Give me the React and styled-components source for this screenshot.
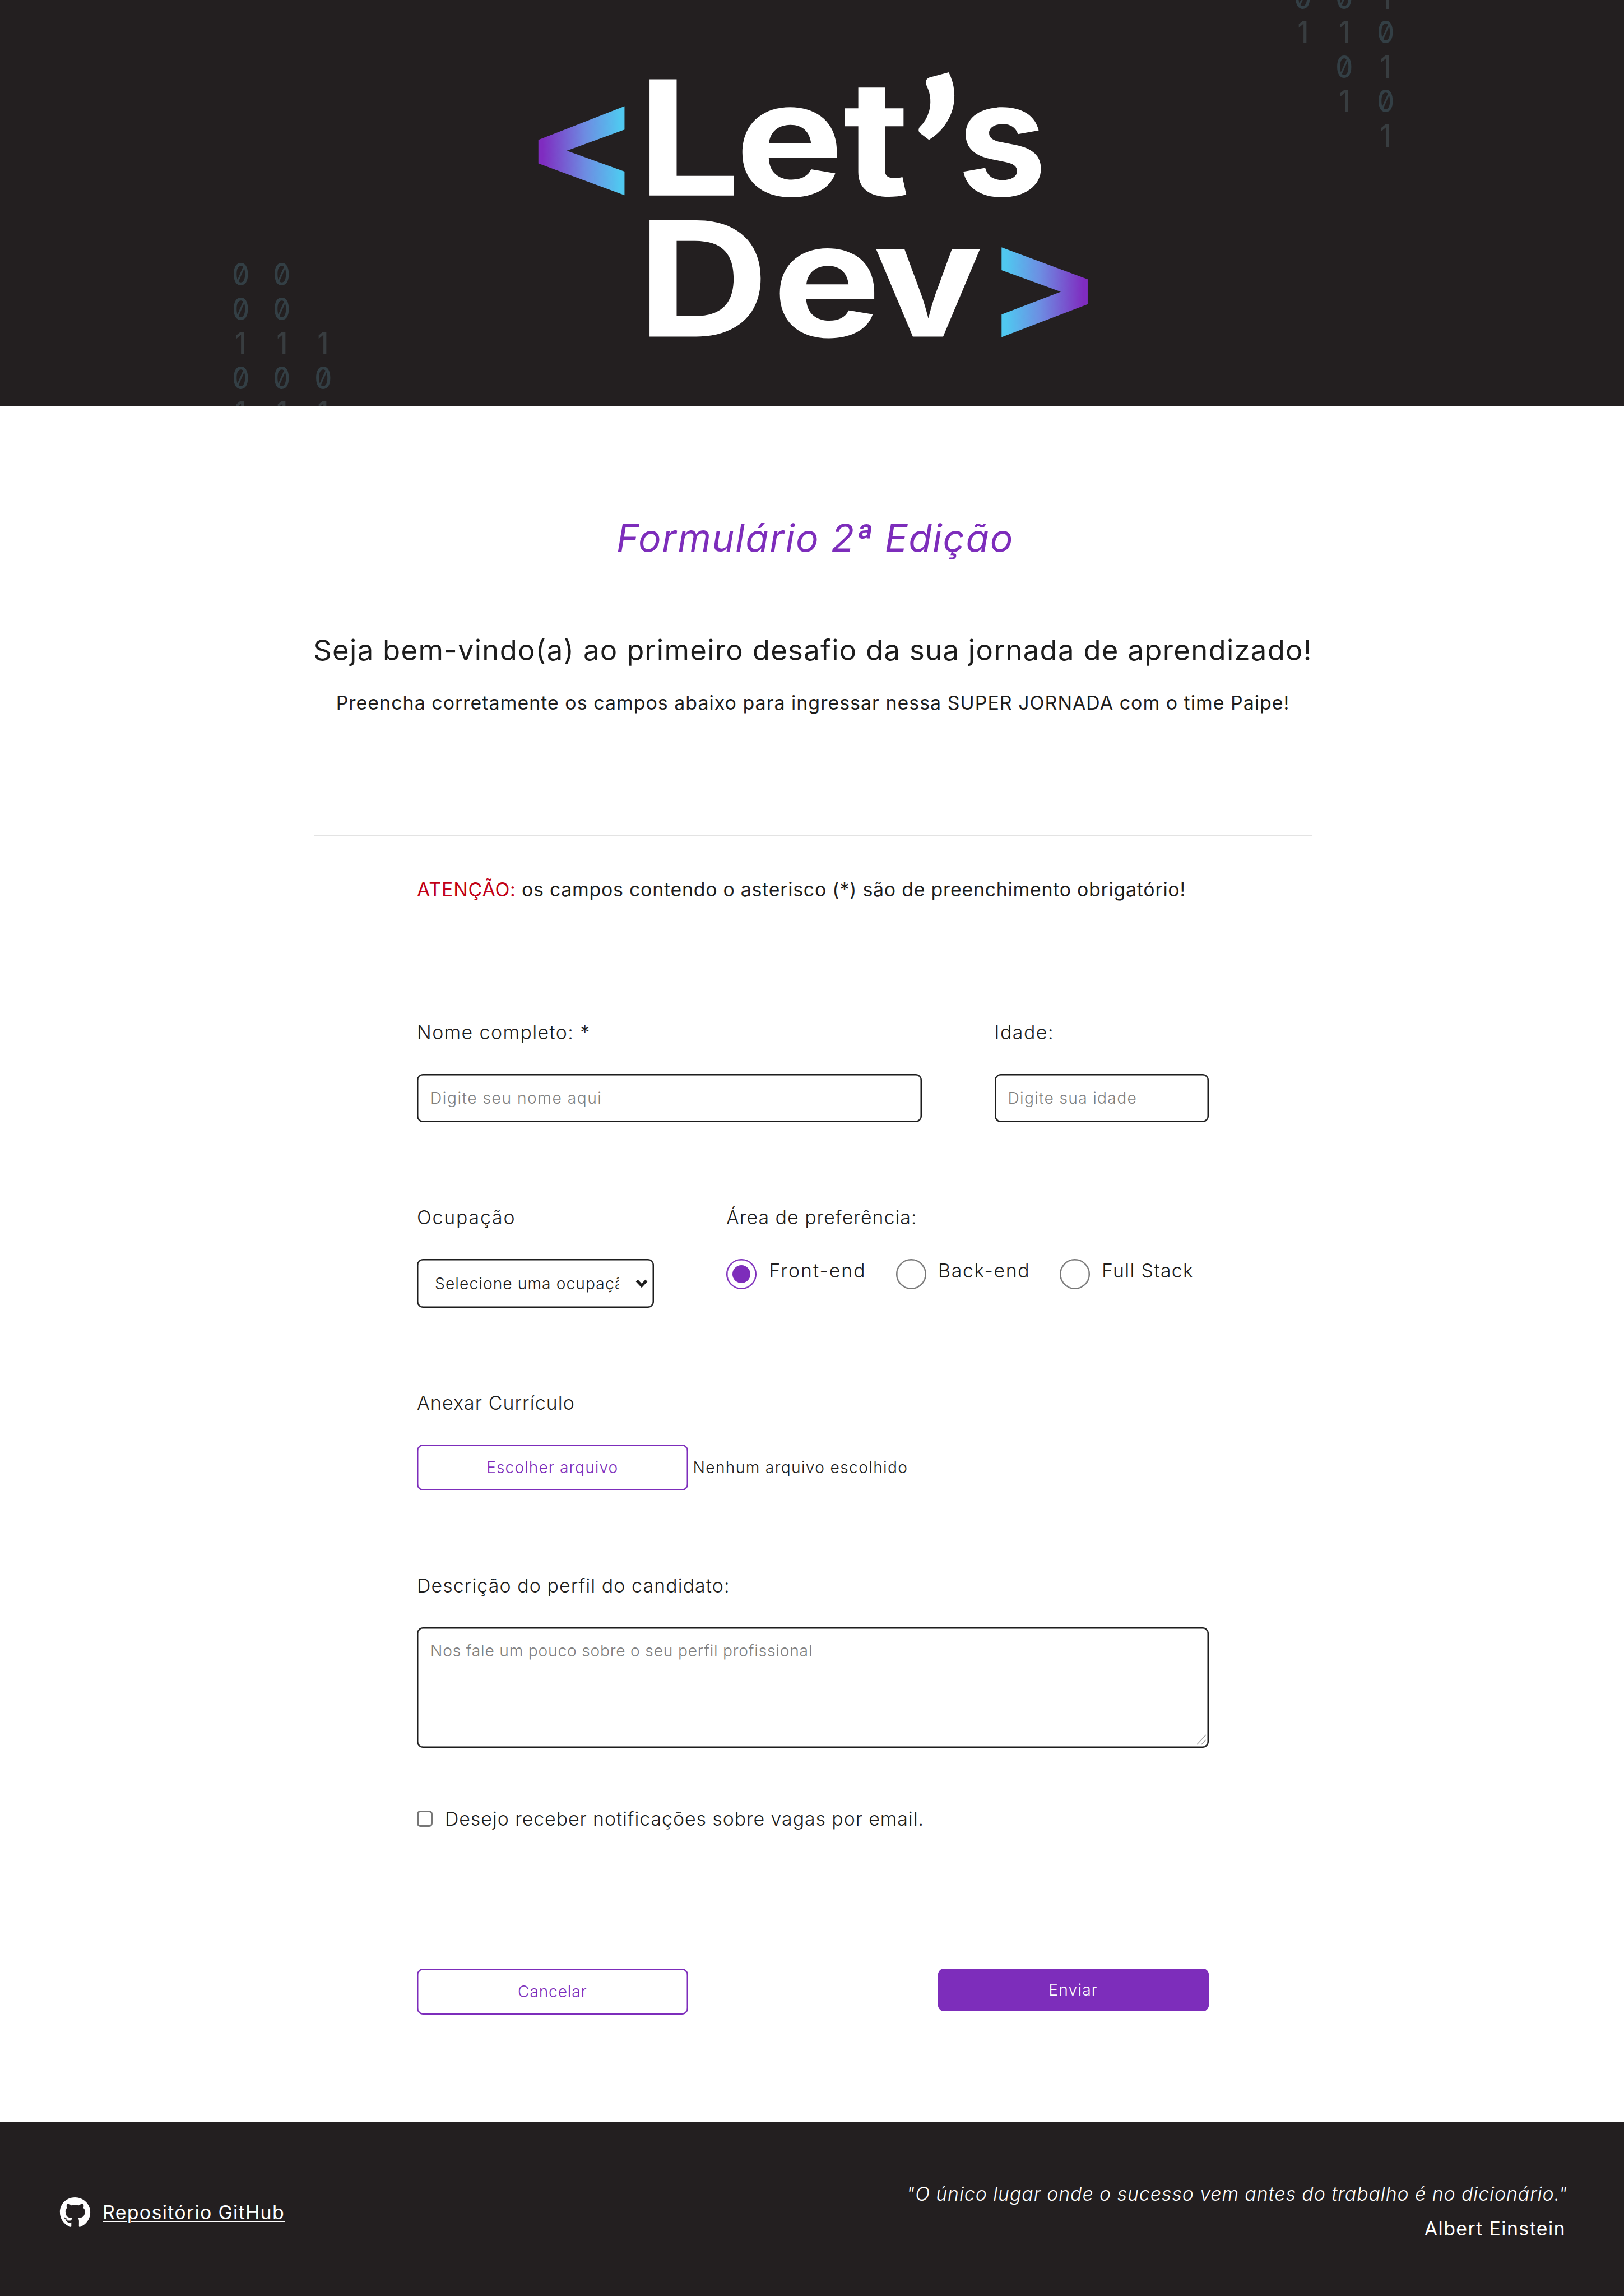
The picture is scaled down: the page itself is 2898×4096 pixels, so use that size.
import React, { useState } from "react";
import styled, { createGlobalStyle, css } from "styled-components";
import { FaGithub } from "react-icons/fa";

const ink = "#1d1d1d";
const dark = "#231f20";
const purple = "#7d2dbb";

const GlobalStyle = createGlobalStyle`
  *, *::before, *::after { box-sizing: border-box; }
  body { margin: 0; background: #fff; }
  body, input, select, textarea, button {
    font-family: Inter, "Liberation Sans", sans-serif;
    color: ${ink};
  }
`;

const Page = styled.div`
  width: 2898px;
  height: 4096px;
  display: flex;
  flex-direction: column;
  overflow: hidden;
`;

/* ---------- header ---------- */

const Header = styled.header`
  position: relative;
  flex: none;
  height: 725px;
  background: ${dark};
  overflow: hidden;
`;

const Logo = styled.svg`
  display: block;
  width: 2898px;
  height: 725px;
`;

const Letters = styled.text`
  font-family: Inter, "Liberation Sans", sans-serif;
  font-weight: 700;
  font-size: 345px;
  fill: #fff;
`;

const Apostrophe = styled.text`
  font-family: Lato, "Liberation Sans", sans-serif;
  font-weight: 900;
  font-size: 460px;
  fill: #fff;
`;

const BinaryRain = styled.div`
  position: absolute;
  top: ${(p) => p.$top}px;
  left: ${(p) => p.$left}px;
  display: flex;
`;

const BitColumn = styled.div`
  width: 73.7px;
  display: flex;
  flex-direction: column;
  align-items: center;
`;

const Bit = styled.span`
  height: 61.5px;
  line-height: 61.5px;
  font-size: 55px;
  font-weight: 500;
  font-feature-settings: "zero" 1;
  color: ${(p) => p.$color};
  transform: scaleX(0.86);
`;

/* ---------- intro ---------- */

const Main = styled.main`
  flex: 1;
  padding-left: 3px;
  display: flex;
  flex-direction: column;
  align-items: center;
`;

const Title = styled.h1`
  margin: 190px 0 124px;
  padding-left: 8px;
  font-size: 67.8px;
  font-weight: 400;
  font-style: italic;
  line-height: 88px;
  letter-spacing: 1.63px;
  color: ${purple};
`;

const Welcome = styled.h2`
  margin: 0 0 39px;
  font-size: 50.8px;
  font-weight: 400;
  line-height: 66px;
  letter-spacing: 1.31px;
  white-space: nowrap;
`;

const Lead = styled.p`
  margin: 0;
  font-size: 33.9px;
  line-height: 44px;
  letter-spacing: 1.03px;
  white-space: nowrap;
`;

const Divider = styled.hr`
  width: 1780px;
  height: 2px;
  margin: 214px 0 73px;
  border: 0;
  background: #e3e3e3;
`;

/* ---------- form ---------- */

const Form = styled.form`
  width: 1413px;
  display: flex;
  flex-direction: column;
`;

const Notice = styled.p`
  margin: 0 0 211px;
  font-size: 33.9px;
  line-height: 44px;
  letter-spacing: 0.74px;
  white-space: nowrap;
`;

const Alert = styled.span`
  color: #c20016;
  letter-spacing: 0.8px;
`;

const Row = styled.div`
  display: flex;
  margin-bottom: ${(p) => p.$after}px;
`;

const Field = styled.div`
  width: ${(p) => p.$width}px;
  margin-left: ${(p) => p.$offset || 0}px;
  display: flex;
  flex-direction: column;
  gap: 52px;
`;

const Label = styled.label`
  font-size: 33.9px;
  font-weight: 300;
  line-height: 44px;
  letter-spacing: ${(p) => p.$track}px;
  white-space: nowrap;
`;

const control = css`
  display: block;
  width: 100%;
  margin: 0;
  border: 2px solid ${ink};
  border-radius: 11px;
  background: #fff;
  box-shadow: inset 0 0 0 0.5px ${ink};
  outline: none;
  font-size: 28.2px;
  font-weight: 300;
  letter-spacing: ${(p) => p.$track}px;
  &::placeholder { color: #808080; opacity: 1; }
`;

const Input = styled.input`
  ${control}
  height: 86px;
  padding: 0 22px;
`;

const SelectBox = styled.div`
  position: relative;
`;

const Select = styled.select`
  ${control}
  height: 87px;
  padding: 0 60px 0 30px;
  appearance: none;
`;

const Chevron = styled.svg`
  position: absolute;
  right: 11px;
  top: 36px;
  width: 22px;
  height: 16px;
`;

const Radios = styled.div`
  display: flex;
`;

const RadioLabel = styled.label`
  flex: none;
  width: ${(p) => p.$width}px;
  display: flex;
  gap: ${(p) => p.$gap}px;
  font-size: 33.9px;
  font-weight: 300;
  line-height: 41px;
  letter-spacing: ${(p) => p.$track}px;
  white-space: nowrap;
`;

const Radio = styled.input`
  appearance: none;
  flex: none;
  width: 54px;
  height: 54px;
  margin: 0;
  border: 2px solid #767676;
  border-radius: 50%;
  box-shadow: inset 0 0 0 0.5px #767676;
  display: grid;
  place-items: center;
  &:checked {
    border-color: ${purple};
    box-shadow: inset 0 0 0 0.5px ${purple};
  }
  &:checked::before {
    content: "";
    width: 32px;
    height: 32px;
    border-radius: 50%;
    background: ${purple};
  }
`;

const FileLine = styled.div`
  display: flex;
  align-items: center;
  gap: 9px;
`;

const FileStatus = styled.span`
  font-size: 28.2px;
  font-weight: 300;
  letter-spacing: 1.33px;
`;

const Button = styled.button`
  width: 483.5px;
  height: ${(p) => (p.$solid ? 76 : 82)}px;
  padding: 0;
  border: ${(p) => (p.$solid ? "0" : `2px solid ${purple}`)};
  border-radius: 11px;
  box-shadow: inset 0 0 0 0.5px ${purple};
  background: ${(p) => (p.$solid ? purple : "#fff")};
  color: ${(p) => (p.$solid ? "#fff" : purple)};
  font-size: 28.2px;
  font-weight: 300;
  letter-spacing: ${(p) => p.$track}px;
`;

const AreaBox = styled.div`
  position: relative;
`;

const TextArea = styled.textarea`
  ${control}
  height: 215px;
  padding: 19px 22px;
  line-height: 42px;
  resize: none;
`;

const Grip = styled.svg`
  position: absolute;
  right: 3px;
  bottom: 4px;
  width: 20px;
  height: 22px;
`;

const CheckLine = styled.label`
  display: flex;
  align-items: center;
  gap: 22px;
  margin-bottom: 245px;
  font-size: 33.9px;
  font-weight: 300;
  line-height: 44px;
  letter-spacing: 0.92px;
`;

const Checkbox = styled.input`
  appearance: none;
  width: 28px;
  height: 29px;
  margin: 0;
  border: 3px solid #767676;
  border-radius: 6px;
`;

const Actions = styled.div`
  display: flex;
  justify-content: space-between;
  align-items: flex-start;
`;

/* ---------- footer ---------- */

const Footer = styled.footer`
  flex: none;
  height: 310px;
  padding: 106px 101px 0 106px;
  display: flex;
  justify-content: space-between;
  align-items: flex-start;
  background: ${dark};
  color: #fff;
  font-size: 33.9px;
  line-height: 44px;
`;

const Repo = styled.a`
  display: flex;
  align-items: center;
  gap: 21px;
  margin-top: 27px;
  color: #fff;
  letter-spacing: 1.32px;
  text-decoration: none;
`;

const RepoName = styled.span`
  text-decoration: underline;
  text-decoration-thickness: 2.4px;
  text-underline-offset: 3px;
`;

const Quote = styled.blockquote`
  margin: 0;
  display: flex;
  flex-direction: column;
  align-items: flex-end;
  gap: 18px;
`;

const Saying = styled.q`
  quotes: none;
  font-style: italic;
  font-weight: 300;
  letter-spacing: 0.92px;
  white-space: nowrap;
`;

const Author = styled.cite`
  padding-right: 3px;
  font-style: normal;
  letter-spacing: 1.4px;
`;

const Binary = ({ top, left, columns }) => (
  <BinaryRain $top={top} $left={left} aria-hidden="true">
    {columns.map((bits, c) => (
      <BitColumn key={c}>
        {bits.split("").map((b, i) => (
          <Bit key={i} $color={b === "0" ? "#333f45" : "#383d40"}>
            {b === "-" ? "" : b}
          </Bit>
        ))}
      </BitColumn>
    ))}
  </BinaryRain>
);

const areas = [
  { name: "Front-end", width: 302.5, gap: 22.5, track: 2.0 },
  { name: "Back-end", width: 292, gap: 21.5, track: 1.64 },
  { name: "Full Stack", width: 260, gap: 21.5, track: 1.3 },
];

export default function App() {
  const [area, setArea] = useState("Front-end");

  return (
    <Page>
      <GlobalStyle />

      <Header>
        <Logo viewBox="0 0 3508 877.6" role="img" aria-label="Let’s Dev">
          <defs>
            <linearGradient id="open" x1="0" x2="1" y1="0" y2="0">
              <stop offset="0.05" stopColor="#7f2cc0" />
              <stop offset="0.55" stopColor="#6d8de2" />
              <stop offset="0.95" stopColor="#50c8f0" />
            </linearGradient>
            <linearGradient id="close" x1="1" x2="0" y1="0" y2="0">
              <stop offset="0.05" stopColor="#7f2cc0" />
              <stop offset="0.55" stopColor="#6d8de2" />
              <stop offset="0.95" stopColor="#50c8f0" />
            </linearGradient>
          </defs>
          <polygon
            fill="url(#open)"
            points="1163,302 1349,229.5 1349,280 1224.5,325.4 1349,370.5 1349,421.5 1163,353"
          />
          <polygon
            fill="url(#close)"
            points="2349.5,603 2163.5,534 2163.5,583.5 2291.5,630 2163.5,679 2163.5,728 2349.5,657"
          />
          <Letters transform="scale(1.14 1)" x="1208 1393 1597" y="422.3">Let</Letters>
          <Apostrophe transform="rotate(6 2027 215)" x="1974" y="510">’</Apostrophe>
          <Letters x="2068" y="422.3">s</Letters>
          <Letters transform="scale(1.14 1)" x="1208 1464 1655" y="726.8">Dev</Letters>
        </Logo>
        <Binary top={459} left={392.6} columns={["00101", "00101", "--101"]} />
        <Binary top={-34.5} left={2288.4} columns={["01", "0101", "10101"]} />
      </Header>

      <Main>
        <Title>Formulário 2ª Edição</Title>
        <Welcome>Seja bem-vindo(a) ao primeiro desafio da sua jornada de aprendizado!</Welcome>
        <Lead>
          Preencha corretamente os campos abaixo para ingressar nessa SUPER JORNADA com o time Paipe!
        </Lead>
        <Divider />

        <Form onSubmit={(e) => e.preventDefault()}>
          <Notice>
            <Alert>ATENÇÃO:</Alert> os campos contendo o asterisco (*) são de preenchimento obrigatório!
          </Notice>

          <Row $after={148}>
            <Field $width={901}>
              <Label htmlFor="name" $track={1.4}>Nome completo: *</Label>
              <Input id="name" placeholder="Digite seu nome aqui" $track={1.52} />
            </Field>
            <Field $width={382.5} $offset={129.5}>
              <Label htmlFor="age" $track={1.5}>Idade:</Label>
              <Input id="age" placeholder="Digite sua idade" $track={1.3} />
            </Field>
          </Row>

          <Row $after={148}>
            <Field $width={423}>
              <Label htmlFor="job" $track={1.8}>Ocupação</Label>
              <SelectBox>
                <Select id="job" $track={1.08}>
                  <option>Selecione uma ocupação</option>
                </Select>
                <Chevron viewBox="0 0 22 16" fill="none" stroke={ink} strokeWidth="5">
                  <path d="M2.5 2.5 11 11.5 19.5 2.5" />
                </Chevron>
              </SelectBox>
            </Field>
            <Field $width={861} $offset={129}>
              <Label as="span" $track={1.0}>Área de preferência:</Label>
              <Radios>
                {areas.map((a) => (
                  <RadioLabel key={a.name} $width={a.width} $gap={a.gap} $track={a.track}>
                    <Radio
                      type="radio"
                      name="area"
                      checked={area === a.name}
                      onChange={() => setArea(a.name)}
                    />
                    {a.name}
                  </RadioLabel>
                ))}
              </Radios>
            </Field>
          </Row>

          <Row $after={148}>
            <Field $width={1413}>
              <Label as="span" $track={1.1}>Anexar Currículo</Label>
              <FileLine>
                <Button type="button" $track={1.04}>Escolher arquivo</Button>
                <FileStatus>Nenhum arquivo escolhido</FileStatus>
              </FileLine>
            </Field>
          </Row>

          <Row $after={104.5}>
            <Field $width={1413}>
              <Label htmlFor="about" $track={1.08}>Descrição do perfil do candidato:</Label>
              <AreaBox>
                <TextArea
                  id="about"
                  placeholder="Nos fale um pouco sobre o seu perfil profissional"
                  $track={0.79}
                />
                <Grip viewBox="0 0 20 22" stroke="#9a9a9a" strokeWidth="1.2">
                  <path d="M2 20 18 3M10 20 18 12" />
                </Grip>
              </AreaBox>
            </Field>
          </Row>

          <CheckLine>
            <Checkbox type="checkbox" />
            Desejo receber notificações sobre vagas por email.
          </CheckLine>

          <Actions>
            <Button type="button" $track={0.8}>Cancelar</Button>
            <Button type="submit" $solid $track={1.17}>Enviar</Button>
          </Actions>
        </Form>
      </Main>

      <Footer>
        <Repo href="#">
          <FaGithub size={56} />
          <RepoName>Repositório GitHub</RepoName>
        </Repo>
        <Quote>
          <Saying>"O único lugar onde o sucesso vem antes do trabalho é no dicionário."</Saying>
          <Author>Albert Einstein</Author>
        </Quote>
      </Footer>
    </Page>
  );
}
